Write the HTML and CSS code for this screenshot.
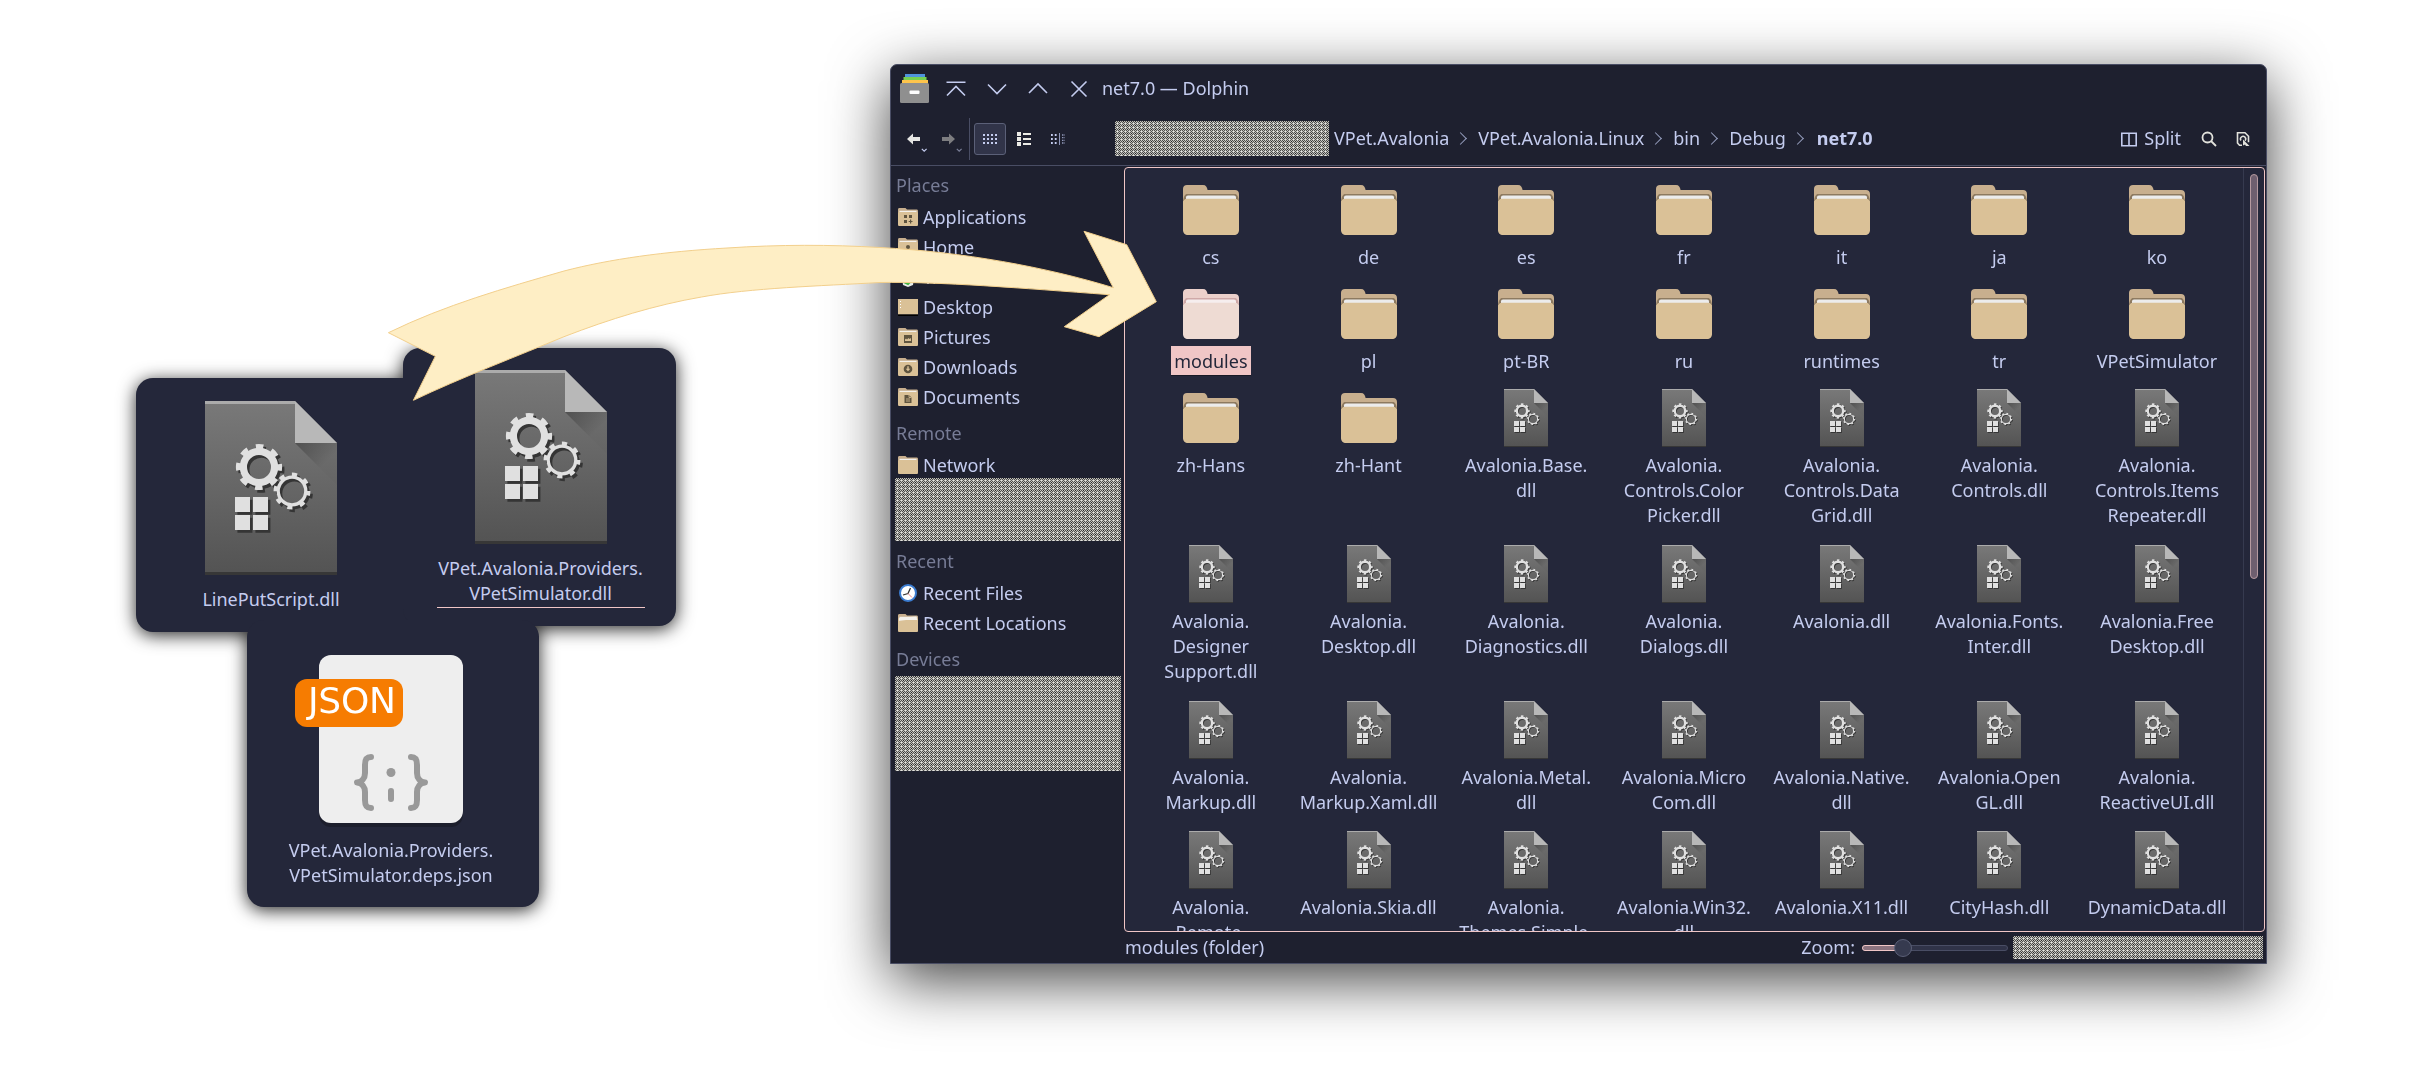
FILE: index.html
```html
<!DOCTYPE html>
<html lang="en">
<head>
<meta charset="utf-8">
<title>net7.0 — Dolphin</title>
<link rel="stylesheet" href="styles.css">
</head>
<body>
<svg class="defs" width="0" height="0" aria-hidden="true">
  <defs>
    <linearGradient id="page" x1="0" y1="0" x2="0" y2="1"><stop offset="0" stop-color="#797979"/><stop offset="1" stop-color="#535353"/></linearGradient>
    <linearGradient id="fold" x1="0" y1="0" x2="0.6" y2="0.6"><stop offset="0" stop-color="#000" stop-opacity=".28"/><stop offset="1" stop-color="#000" stop-opacity=".02"/></linearGradient>
    <g id="gears">
      <circle cx="28" cy="25" r="5.2" fill="none" stroke="currentColor" stroke-width="2.4"/>
      <circle cx="28" cy="25" r="6.8" fill="none" stroke="currentColor" stroke-width="1.8" stroke-dasharray="2.5 2.84" stroke-dashoffset="1.25"/>
      <circle cx="39" cy="33" r="4.6" fill="none" stroke="currentColor" stroke-width="1.1"/>
      <circle cx="39" cy="33" r="5.4" fill="none" stroke="currentColor" stroke-width="1.5" stroke-dasharray="1.7 2.541" stroke-dashoffset=".2"/>
      <path fill="currentColor" d="M20 35h5v5h-5zM26 35h5v5h-5zM20 41h5v5h-5zM26 41h5v5h-5z"/>
    </g>
    <symbol id="dll" viewBox="0 0 64 64">
      <path fill="url(#page)" d="M10 3h30l14 14v44H10z"/>
      <path fill="#ababab" d="M10 3h30v1H10z"/>
      <path fill="#373737" d="M10 60h44v1H10z"/>
      <path fill="url(#fold)" d="M40 17h14v14z"/>
      <path fill="#b8b8b8" d="M40 3l14 14H40z"/>
      <use href="#gears" x=".8" y=".9" color="#353535"/>
      <use href="#gears" color="#e0e0e0"/>
    </symbol>
    <symbol id="folder" viewBox="0 0 64 64">
      <path class="f-back" d="M8 7h16c3 0 4 2 4.600 5H56c2.500 0 4 1.500 4 4v12H4V11c0-2.500 1.500-4 4-4z"/>
      <path class="f-shade" d="M8 16h48c2 0 3 2 4 7H4c1-5 2-7 4-7z"/>
      <path class="f-paper" d="M9 17.500h46c1.200 0 2 .8 2 2V24H7v-4.500c0-1.200.8-2 2-2z"/>
      <path class="f-front" d="M8 20.700h48c2.500 0 4 1.800 4 4V52c0 3-2 5-5 5H9c-3 0-5-2-5-5V24.700c0-2.200 1.500-4 4-4z"/>
    </symbol>
    <symbol id="place" viewBox="0 0 20 18">
      <path fill="#c8af8e" d="M1.500 0H7.500l1.500 1.500h9.500c1 0 1.500.6 1.500 1.500v5H0V1.500C0 .6.500 0 1.500 0z"/>
      <path fill="#f4f1ec" d="M1.500 2.800h17v2h-17z"/>
      <path fill="#dac197" d="M1 4h18l1 1v11.500c0 1-.5 1.500-1.500 1.500h-17C.5 18 0 17.500 0 16.500V5z"/>
    </symbol>
  </defs>
</svg>

<main class="scene">
  <section class="cards">
    <figure class="card card-line"><svg class="big"><use href="#dll"/></svg><figcaption>LinePutScript.dll</figcaption></figure>
    <figure class="card card-provider"><svg class="big"><use href="#dll"/></svg><figcaption class="focused">VPet.Avalonia.Providers.<br>VPetSimulator.dll</figcaption></figure>
    <figure class="card card-json">
      <svg class="json" viewBox="0 0 192 192">
        <rect x="24" y="16" width="144" height="168" rx="12" fill="#1c1e2c"/>
        <rect x="24" y="12" width="144" height="168" rx="12" fill="#eee"/>
        <rect x="0" y="36" width="108" height="48" rx="12" fill="#f67c01"/>
        <text x="13" y="70" class="json-text" textLength="88">JSON</text>
        <g fill="none" stroke="#999" stroke-width="6" stroke-linecap="round" stroke-linejoin="round"><path d="M76 114c-5 0-6 3-6 8v8c0 5-3 9-8 9.500 5 .5 8 4.500 8 9.500v8c0 5 1 8 6 8M116 114c5 0 6 3 6 8v8c0 5 3 9 8 9.500-5 .5-8 4.500-8 9.500v8c0 5-1 8-6 8M96 148v8"/></g>
        <circle cx="96" cy="129.500" r="4.500" fill="#999"/>
      </svg>
      <figcaption>VPet.Avalonia.Providers.<br>VPetSimulator.deps.json</figcaption>
    </figure>
  </section>

  <section class="window">
    <header class="titlebar">
      <svg class="app" viewBox="0 0 30 30"><rect x="5" y="0" width="20" height="6" fill="#4f93dc"/><rect x="3.500" y="3" width="23" height="6" fill="#77d052"/><rect x="2" y="6" width="26" height="6" fill="#fdc44c"/><rect x="0" y="9" width="29" height="20" rx="1.500" fill="#8f8f8f"/><rect x="9.500" y="16.500" width="10" height="3.500" rx="1" fill="#fcfcfc"/></svg>
      <svg class="wbtn" viewBox="0 0 20 20"><path d="M.5 3.200h19M1 16.500l9-9 9 9"/></svg>
      <svg class="wbtn" viewBox="0 0 20 20"><path d="M1 5.500l9 9 9-9"/></svg>
      <svg class="wbtn" viewBox="0 0 20 20"><path d="M1 14l9-9 9 9"/></svg>
      <svg class="wbtn" viewBox="0 0 20 20"><path d="M2.500 2.500l15 15M17.500 2.500l-15 15"/></svg>
      <h1>net7.0 — Dolphin</h1>
    </header>

    <nav class="toolbar">
      <svg class="arrow" viewBox="0 0 22 20"><path fill="#e6e6e4" d="M0 6l6-5.500v3.500h7v4H6v3.500z"/><path class="caret" d="M14.800 15.800l2.400 2.400 2.400-2.400"/></svg>
      <svg class="arrow next" viewBox="0 0 22 20"><path fill="#7d7d80" d="M13 6L7 .5V4H0v4h7v3.500z"/><path class="caret dim" d="M14.800 15.800l2.400 2.400 2.400-2.400"/></svg>
      <span class="rule"></span>
      <span class="mode on"><svg viewBox="0 0 16 12"><path stroke="#c4ccef" stroke-width="2" stroke-dasharray="2 2" d="M1 2h14M1 6h14M1 10h14"/></svg></span>
      <span class="mode"><svg viewBox="0 0 16 14"><path fill="#ecebe6" d="M1 0h4v4H1zM1 5h4v4H1zM1 10h4v4H1zM7 1h8v2H7zM7 6h8v2H7zM7 11h8v2H7z"/></svg></span>
      <span class="mode third"><svg viewBox="0 0 16 14"><path stroke="#c4ccef" stroke-width="1.800" stroke-dasharray="1.800 2" d="M1 3h5.600M1 7h5.600M1 11h5.600"/><path fill="#8f96b8" d="M9 1h1v12H9z"/><path stroke="#9299bb" stroke-width="1.300" stroke-dasharray="1.500 1" d="M12 3h3M12 5.600h3M12 8.300h3M12 11h3"/></svg></span>
      <span class="noise crumb-noise"></span>
      <ol class="crumbs"><li>VPet.Avalonia</li><li>VPet.Avalonia.Linux</li><li>bin</li><li>Debug</li><li class="here">net7.0</li></ol>
      <span class="split"><svg viewBox="0 0 16 15"><path fill="none" stroke="#c4ccef" stroke-width="1.600" d="M.8 1.300h14.400v12.400H.8zM8 1v13"/></svg><span>Split</span></span>
      <svg class="tool" viewBox="0 0 16 16"><path fill="none" stroke="#e2e2dc" stroke-width="1.800" d="M10 10l5 5"/><circle cx="6.500" cy="6.500" r="5" fill="none" stroke="#e2e2dc" stroke-width="1.800"/></svg>
      <svg class="tool last" viewBox="0 0 16 16"><path fill="none" stroke="#e2e2dc" stroke-width="1.600" d="M7 14.200H4.500L2.500 12V1.800h7.500l3.500 3.500v6"/><path fill="none" stroke="#e2e2dc" stroke-width="1.500" d="M6 9.500a2.600 2.600 0 1 1 4 .2"/><path fill="#e2e2dc" d="M8 8.500l6.500 6.500H11l-1-1.500-2 1z"/></svg>
    </nav>

    <div class="body">
      <aside class="places">
        <h2>Places</h2>
        <div class="item"><svg viewBox="0 0 20 18"><use href="#place"/><path fill="#5f543f" d="M6 7h3v3H6zM11 7h3v3h-3zM6 12h3v3H6zM12 11.500h1.200v1.400h1.300v1.200h-1.300v1.400H12v-1.400h-1.300v-1.200H12z"/></svg><span>Applications</span></div>
        <div class="item"><svg viewBox="0 0 20 18"><use href="#place"/><circle cx="10" cy="9" r="2" fill="#5f543f"/><path fill="#5f543f" d="M6.500 15c0-4.500 7-4.500 7 0z"/></svg><span>Home</span></div>
        <div class="item"><svg viewBox="0 0 20 18"><path fill="#e8ecea" d="M3 0h14l-2 17-5 2-5-2z"/><path fill="none" stroke="#43b543" stroke-width="2" d="M6 14l4 2 3-3"/></svg><span>Trash</span></div>
        <div class="item"><svg viewBox="0 0 20 18"><path fill="#dac197" d="M0 1h20v15.500H0z"/><path fill="#000" d="M0 16.500h20V18H0z"/><path fill="#fff" d="M2 3h1v1H2zM2 6h1v1H2zM2 9h1v1H2z"/></svg><span>Desktop</span></div>
        <div class="item"><svg viewBox="0 0 20 18"><use href="#place"/><path fill="#5f543f" fill-rule="evenodd" d="M6 7h8v8H6zM7 13h6v-3l-1.500 1-1-1-1.500 1.500-1-1-1 1z"/></svg><span>Pictures</span></div>
        <div class="item"><svg viewBox="0 0 20 18"><use href="#place"/><circle cx="10" cy="11" r="4.300" fill="#5f543f"/><path fill="#dac197" d="M9.300 8.300h1.400v2.500h1.600L10 13.300l-2.300-2.500h1.600z"/></svg><span>Downloads</span></div>
        <div class="item"><svg viewBox="0 0 20 18"><use href="#place"/><path fill="#5f543f" d="M6.500 7h4.500l2.500 2.500V15h-7z"/><path fill="none" stroke="#dac197" stroke-width=".8" d="M8 11h4M8 13h4M11 7v2.500h2.500"/></svg><span>Documents</span></div>
        <h2>Remote</h2>
        <div class="item"><svg viewBox="0 0 20 18"><use href="#place"/></svg><span>Network</span></div>
        <div class="noise remote-noise"></div>
        <h2>Recent</h2>
        <div class="item"><svg viewBox="0 0 20 18"><circle cx="10" cy="9" r="8" fill="#fff" stroke="#3a7bd0" stroke-width="2"/><path fill="none" stroke="#333" stroke-width="1.300" d="M12.500 4L10 9.500l-5 1.500"/><path stroke="#e88" stroke-width="1" d="M10 9.500l4 4"/></svg><span>Recent Files</span></div>
        <div class="item"><svg viewBox="0 0 20 18"><use href="#place"/><path fill="#f4f1ec" d="M1 4l17.500-1.500 1 4.500H1z"/><path fill="#dac197" d="M0 7l8-1h12v10.500L18.500 18h-17L0 16.500z"/></svg><span>Recent Locations</span></div>
        <h2>Devices</h2>
        <div class="noise device-noise"></div>
      </aside>

      <div class="main">
        <div class="view">
          <div class="grid">
            <div class="file"><svg><use href="#folder"/></svg><span>cs</span></div>
            <div class="file"><svg><use href="#folder"/></svg><span>de</span></div>
            <div class="file"><svg><use href="#folder"/></svg><span>es</span></div>
            <div class="file"><svg><use href="#folder"/></svg><span>fr</span></div>
            <div class="file"><svg><use href="#folder"/></svg><span>it</span></div>
            <div class="file"><svg><use href="#folder"/></svg><span>ja</span></div>
            <div class="file"><svg><use href="#folder"/></svg><span>ko</span></div>

            <div class="file selected"><svg><use href="#folder"/></svg><span>modules</span></div>
            <div class="file"><svg><use href="#folder"/></svg><span>pl</span></div>
            <div class="file"><svg><use href="#folder"/></svg><span>pt-BR</span></div>
            <div class="file"><svg><use href="#folder"/></svg><span>ru</span></div>
            <div class="file"><svg><use href="#folder"/></svg><span>runtimes</span></div>
            <div class="file"><svg><use href="#folder"/></svg><span>tr</span></div>
            <div class="file"><svg><use href="#folder"/></svg><span>VPetSimulator</span></div>

            <div class="file"><svg><use href="#folder"/></svg><span>zh-Hans</span></div>
            <div class="file"><svg><use href="#folder"/></svg><span>zh-Hant</span></div>
            <div class="file"><svg><use href="#dll"/></svg><span>Avalonia.Base.<br>dll</span></div>
            <div class="file"><svg><use href="#dll"/></svg><span>Avalonia.<br>Controls.Color<br>Picker.dll</span></div>
            <div class="file"><svg><use href="#dll"/></svg><span>Avalonia.<br>Controls.Data<br>Grid.dll</span></div>
            <div class="file"><svg><use href="#dll"/></svg><span>Avalonia.<br>Controls.dll</span></div>
            <div class="file"><svg><use href="#dll"/></svg><span>Avalonia.<br>Controls.Items<br>Repeater.dll</span></div>

            <div class="file"><svg><use href="#dll"/></svg><span>Avalonia.<br>Designer<br>Support.dll</span></div>
            <div class="file"><svg><use href="#dll"/></svg><span>Avalonia.<br>Desktop.dll</span></div>
            <div class="file"><svg><use href="#dll"/></svg><span>Avalonia.<br>Diagnostics.dll</span></div>
            <div class="file"><svg><use href="#dll"/></svg><span>Avalonia.<br>Dialogs.dll</span></div>
            <div class="file"><svg><use href="#dll"/></svg><span>Avalonia.dll</span></div>
            <div class="file"><svg><use href="#dll"/></svg><span>Avalonia.Fonts.<br>Inter.dll</span></div>
            <div class="file"><svg><use href="#dll"/></svg><span>Avalonia.Free<br>Desktop.dll</span></div>

            <div class="file"><svg><use href="#dll"/></svg><span>Avalonia.<br>Markup.dll</span></div>
            <div class="file"><svg><use href="#dll"/></svg><span>Avalonia.<br>Markup.Xaml.dll</span></div>
            <div class="file"><svg><use href="#dll"/></svg><span>Avalonia.Metal.<br>dll</span></div>
            <div class="file"><svg><use href="#dll"/></svg><span>Avalonia.Micro<br>Com.dll</span></div>
            <div class="file"><svg><use href="#dll"/></svg><span>Avalonia.Native.<br>dll</span></div>
            <div class="file"><svg><use href="#dll"/></svg><span>Avalonia.Open<br>GL.dll</span></div>
            <div class="file"><svg><use href="#dll"/></svg><span>Avalonia.<br>ReactiveUI.dll</span></div>

            <div class="file"><svg><use href="#dll"/></svg><span>Avalonia.<br>Remote.</span></div>
            <div class="file"><svg><use href="#dll"/></svg><span>Avalonia.Skia.dll</span></div>
            <div class="file"><svg><use href="#dll"/></svg><span>Avalonia.<br>Themes.Simple.</span></div>
            <div class="file"><svg><use href="#dll"/></svg><span>Avalonia.Win32.<br>dll</span></div>
            <div class="file"><svg><use href="#dll"/></svg><span>Avalonia.X11.dll</span></div>
            <div class="file"><svg><use href="#dll"/></svg><span>CityHash.dll</span></div>
            <div class="file"><svg><use href="#dll"/></svg><span>DynamicData.dll</span></div>
          </div>
          <div class="scroll"><div class="thumb"></div></div>
        </div>
        <footer class="status">
          <span class="info">modules (folder)</span>
          <span>Zoom:</span>
          <div class="slider"><div class="fill"></div><div class="knob"></div></div>
          <span class="noise status-noise"></span>
        </footer>
      </div>
    </div>
  </section>

  <svg class="pointer" viewBox="0 0 2422 1088"><path d="M388.400 332.700C445 305 505 288 564 271C610 259 665 251.500 727 248C780 244.500 830 244.500 880 247.500C963 252 1046 267 1113.300 287.700L1084 231.300L1126.700 244.700L1156.300 301.700L1099 336.700L1064.300 326.700L1109.500 294.700C1020 288 940 281.500 880 282.500C820 286 750 288 701.600 297C655 305 610 319 564 336.700C520 355 460 378 413.400 400.300L435.300 356.300Z"/></svg>
</main>
</body>
</html>
```
FILE: styles.css
```css
* { box-sizing: border-box; }

body {
  margin: 0;
  background: #fff;
  color: #c4ccef;
  font: 18px/25px "Noto Sans", sans-serif;
}

h1, h2, figure, ol { margin: 0; padding: 0; font-size: inherit; font-weight: 400; list-style: none; }
svg { display: block; flex: none; }
.defs { position: absolute; }

.scene { position: relative; width: 2422px; height: 1088px; overflow: hidden; }

/* File cards */
.cards { position: absolute; inset: 0; filter: drop-shadow(0 3px 9px rgba(0, 0, 0, .85)); }
.card {
  position: absolute;
  display: flex;
  flex-direction: column;
  align-items: center;
  border-radius: 17px;
  background: #24273a;
  text-align: center;
  white-space: nowrap;
}
.card-line { left: 136px; top: 378px; width: 290px; height: 254px; padding: 14px 20px 0 0; }
.card-provider { left: 403px; top: 348px; width: 273px; height: 278px; padding-top: 13px; padding-left: 2px; }
.card-json { left: 247px; top: 620px; width: 292px; height: 287px; padding-top: 23px; padding-right: 4px; }
.big { width: 192px; height: 192px; }
.card figcaption { margin-top: 3px; }
.card .focused { width: 208px; height: 52px; border-bottom: 1px solid #f0c6c6; }
.json { width: 192px; height: 192px; }
.json-text { font: 36px "DejaVu Sans", sans-serif; fill: #fff; }

/* Window */
.window {
  position: absolute;
  left: 890px;
  top: 64px;
  width: 1377px;
  height: 900px;
  display: flex;
  flex-direction: column;
  border: 1px solid #494d64;
  border-radius: 7px 7px 0 0;
  background: #1e202f;
  box-shadow: 0 16px 60px rgba(0, 0, 0, .75);
}

.titlebar { display: flex; align-items: center; height: 48px; padding-left: 9px; }
.app { width: 30px; height: 30px; margin-right: 16px; }
.wbtn { width: 20px; height: 20px; margin-right: 21px; fill: none; stroke: #c4ccef; stroke-width: 1.6; }
.titlebar h1 { margin: -2px 0 0 -8px; }

.toolbar { display: flex; align-items: center; height: 53px; padding-left: 16px; border-bottom: 1px solid #494d64; white-space: nowrap; }
.arrow { width: 22px; height: 20px; margin: 8px 13px 0 0; }
.arrow.next { margin-right: 5px; }
.caret { fill: none; stroke: #c4ccef; stroke-width: 1.2; }
.caret.dim { stroke: #7a7f98; }
.rule { width: 1px; height: 42px; background: #494d64; }
.mode { display: flex; align-items: center; justify-content: center; width: 32px; height: 32px; margin-left: 4px; border-radius: 3px; }
.mode svg { width: 16px; }
.mode.on { border: 1px solid #5b6078; background: #313449; }
.mode + .mode { margin-left: 2px; }
.crumb-noise { width: 214px; height: 35px; margin: -2px 5px 0 41px; }
.crumbs { display: flex; flex: 1; margin-top: -1px; }
.crumbs li { display: flex; align-items: center; }
.crumbs li:not(:last-child)::after {
  content: "";
  width: 8px;
  height: 8px;
  margin: 0 13px 0 7px;
  border: solid #979fc0;
  border-width: 1.3px 1.3px 0 0;
  transform: rotate(45deg);
}
.crumbs .here { padding-left: 2px; font-weight: 700; }
.split { display: flex; align-items: center; gap: 7px; margin-right: 20px; }
.split svg { width: 16px; height: 15px; }
.split span { margin-top: -1px; }
.tool { width: 16px; height: 16px; }
.tool.last { margin: 0 15px 0 18px; }

/* 4px dither that hides private entries */
.noise {
  display: block;
  background:
    conic-gradient(from 0deg at 1px 1px, transparent 0 75%, #262626 0) 0 0 / 4px 4px,
    conic-gradient(from 0deg at 1px 1px, transparent 0 75%, #e4e4e0 0) 2px 2px / 4px 4px,
    repeating-conic-gradient(#c3c3bf 0 25%, #4e4e4c 0 50%) 0 0 / 2px 2px;
}

.body { display: flex; flex: 1; min-height: 0; }
.places { width: 233px; }
.places h2 { height: 38px; padding: 9px 0 0 5px; color: #777c96; }
.places h2:first-child { height: 36px; padding-top: 7px; }
.item { display: flex; align-items: center; gap: 5px; height: 30px; padding-left: 7px; }
.item svg { width: 20px; height: 18px; overflow: visible; }
.remote-noise { width: 226px; height: 63px; margin: -2px 0 -1px 4px; }
.device-noise { width: 226px; height: 95px; margin-left: 4px; }

.main { display: flex; flex: 1; flex-direction: column; padding: 1px 1px 0 0; }
.view { display: flex; height: 765px; border: 1px solid #f0c6c6; border-radius: 4px; background: #24273a; overflow: hidden; }
.grid {
  display: grid;
  grid-template-columns: repeat(7, 157.7px);
  grid-template-rows: 104px 104px 156px 156px 130px 130px;
  width: 1118px;
  padding: 10px 0 0 7px;
}
.file { display: flex; flex-direction: column; align-items: center; text-align: center; white-space: nowrap; }
.file svg { width: 64px; height: 64px; }
.file span { padding: 3px 3px 1px; }
.f-back { fill: var(--folder-back, #c8af8e); }
.f-shade { fill: var(--folder-shade, #8d7a60); }
.f-paper { fill: var(--folder-paper, #ececec); }
.f-front { fill: var(--folder-front, #dac197); }
.selected {
  --folder-back: #ebd0cb;
  --folder-shade: #cfa9a8;
  --folder-paper: #f6eeee;
  --folder-front: #eedbd3;
  color: #24273a;
}
.selected span { background: #f0c6c6; box-shadow: 0 1px #181926; }
.scroll { width: 20px; padding: 6px 0 0 6px; border-left: 1px solid #363a4f; }
.thumb { width: 8px; height: 405px; border: 1px solid #b59aa0; border-radius: 4px; background: #6e5f6f; }

.status { display: flex; align-items: center; flex: 1; padding: 0 2px 0 1px; }
.info { flex: 1; }
.slider { position: relative; width: 146px; height: 6px; margin: 0 5px 0 7px; border: 1px solid #494d64; border-radius: 3px; background: #303348; }
.fill { width: 40px; height: 6px; margin: -1px; border: 1px solid #f0c6c6; border-radius: 3px; background: #8b737f; }
.knob { position: absolute; left: 31px; top: -7px; width: 18px; height: 18px; border: 1px solid #5b6078; border-radius: 50%; background: #363a4f; }
.status-noise { width: 250px; height: 23px; }

.pointer { position: absolute; inset: 0; width: 2422px; height: 1088px; fill: #feeec5; stroke: #f2cf8c; stroke-width: 1; }
```
